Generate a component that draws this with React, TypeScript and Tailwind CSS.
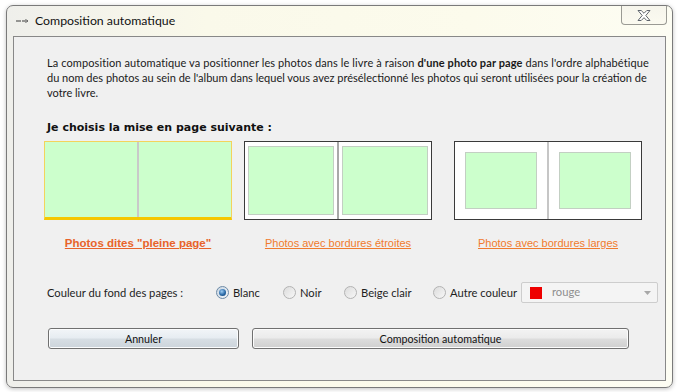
import React from "react";

function Radio({ checked }: { checked?: boolean }) {
  return (
    <div
      className={
        "w-[13px] h-[13px] rounded-full border flex items-center justify-center shrink-0 " +
        (checked
          ? "border-[#6d8aa6] bg-[linear-gradient(135deg,#c9d6e2,#f4f7fa)]"
          : "border-[#b3b3b3] bg-[linear-gradient(135deg,#dcdcdc,#f7f7f7)]")
      }
    >
      {checked && (
        <div className="w-[7px] h-[7px] rounded-full bg-[radial-gradient(circle_at_40%_35%,#9fcdf3,#2a6aa8_55%,#0d3a66)]" />
      )}
    </div>
  );
}

function RadioItem({ label, checked, w }: { label: string; checked?: boolean; w: string }) {
  return (
    <div className={"flex items-center gap-[4px] shrink-0 " + w}>
      <Radio checked={checked} />
      <span className="text-[11.2px] leading-[15px] text-[#1e1e1e] whitespace-nowrap">{label}</span>
    </div>
  );
}

export default function App() {
  const ui = "font-['Lato','Segoe_UI',sans-serif]";
  return (
    <div className={"w-[678px] h-[392px] bg-white pt-[5px] pl-[6px] " + ui}>
      <div className="w-[667px] h-[383px] rounded-[7px] border border-[#7a7a7a] shadow-[0_1px_4px_rgba(0,0,0,0.25)] flex flex-col bg-[linear-gradient(90deg,#efefeb,#faf9ea_30%,#fcfbec_70%,#fdfdf3)]">
        {/* title bar */}
        <div className="h-[30px] flex items-start shrink-0">
          <div className="flex items-center h-[30px] pl-[9px]">
            <svg width="13" height="6" viewBox="0 0 13 6">
              <line x1="0" y1="3" x2="5" y2="3" stroke="#3a3a3a" strokeWidth="1" />
              <line x1="6" y1="3" x2="10" y2="3" stroke="#3a3a3a" strokeWidth="1" />
              <path d="M9.5 1.5 L12 3 L9.5 4.5" fill="none" stroke="#555" strokeWidth="1" />
            </svg>
            <span className="ml-[6px] text-[12.3px] text-[#111] leading-[16px]">Composition automatique</span>
          </div>
          <div className="ml-auto mr-[5px] w-[46px] h-[19px] rounded-b-[4px] border border-t-0 border-[#9a9a94] flex items-center justify-center bg-[linear-gradient(#f6f5ec,#fbfaf0)]">
            <svg width="14" height="11" viewBox="0 0 14 11">
              <polygon
                points="1,0.5 4.2,0.5 7,3.3 9.8,0.5 13,0.5 8.8,5.5 13,10.5 9.8,10.5 7,7.7 4.2,10.5 1,10.5 5.2,5.5"
                fill="#ffffff"
                stroke="#5e646c"
                strokeWidth="1"
                strokeLinejoin="round"
              />
            </svg>
          </div>
        </div>

        {/* inner panel */}
        <div className="mx-[6px] h-[345px] border border-[#888888] bg-[#f0f0f0] flex flex-col shrink-0">
          <div className="pl-[33px] pt-[18px] text-[11px] leading-[15px] text-[#1a1a1a]">
            <div className="whitespace-nowrap tracking-[0.1px]">
              La composition automatique va positionner les photos dans le livre à raison{" "}
              <b className="font-bold">d'une photo par page</b> dans l'ordre alphabétique
            </div>
            <div className="whitespace-nowrap">
              du nom des photos au sein de l'album dans lequel vous avez présélectionné les photos qui seront utilisées pour la création de
            </div>
            <div className="whitespace-nowrap">votre livre.</div>
          </div>

          <div className="pl-[33px] mt-[20px] text-[11px] leading-[15px] font-bold text-[#111] font-['DejaVu_Sans',sans-serif]">
            Je choisis la mise en page suivante :
          </div>

          {/* thumbnails */}
          <div className="flex pl-[30px] mt-[6px]">
            <div className="flex flex-col items-center w-[188px]">
              <div className="w-[188px] h-[79px] border border-[#f3d35c] border-b-[3px] border-b-[#f5c700] bg-[#ccffcc] flex">
                <div className="flex-1" />
                <div className="w-[2px] bg-[#c9c9c9]" />
                <div className="flex-1" />
              </div>
              <a className="mt-[16px] text-[11.5px] leading-[15px] font-bold text-[#e8632a] underline font-['Liberation_Sans',sans-serif] whitespace-nowrap">
                Photos dites "pleine page"
              </a>
            </div>

            <div className="flex flex-col items-center w-[188px] ml-[12px]">
              <div className="w-[188px] h-[79px] border border-[#3a3a3a] bg-white flex">
                <div className="flex-1 px-[3px] py-[4px] flex">
                  <div className="flex-1 bg-[#ccffcc] border border-[#c3cfc3]" />
                </div>
                <div className="w-[2px] bg-[#a9a9a9]" />
                <div className="flex-1 px-[3px] py-[4px] flex">
                  <div className="flex-1 bg-[#ccffcc] border border-[#c3cfc3]" />
                </div>
              </div>
              <a className="mt-[16px] text-[11px] leading-[15px] text-[#f07b2e] underline font-['Liberation_Sans',sans-serif] whitespace-nowrap">
                Photos avec bordures étroites
              </a>
            </div>

            <div className="flex flex-col items-center w-[188px] ml-[22px]">
              <div className="w-[188px] h-[79px] border border-[#3a3a3a] bg-white flex">
                <div className="flex-1 p-[10px] flex">
                  <div className="flex-1 bg-[#ccffcc] border border-[#c3cfc3]" />
                </div>
                <div className="w-[2px] bg-[#c6c6c6]" />
                <div className="flex-1 p-[10px] flex">
                  <div className="flex-1 bg-[#ccffcc] border border-[#c3cfc3]" />
                </div>
              </div>
              <a className="mt-[16px] text-[11px] leading-[15px] text-[#f07b2e] underline font-['Liberation_Sans',sans-serif] whitespace-nowrap">
                Photos avec bordures larges
              </a>
            </div>
          </div>

          {/* background colour row */}
          <div className="flex items-center h-[21px] mt-[31px] pl-[33px]">
            <span className="w-[169px] shrink-0 text-[11.2px] leading-[15px] text-[#1e1e1e] whitespace-nowrap">Couleur du fond des pages :</span>
            <RadioItem label="Blanc" checked w="w-[67px]" />
            <RadioItem label="Noir" w="w-[61px]" />
            <RadioItem label="Beige clair" w="w-[89px]" />
            <RadioItem label="Autre couleur" w="w-[88px]" />
            <div className="w-[137px] h-[21px] border border-[#cdcdcd] rounded-[2px] bg-[#f4f4f4] flex items-center pl-[8px] pr-[6px]">
              <div className="w-[12px] h-[12px] bg-[#ee0000]" />
              <span className="ml-[10px] text-[11.2px] text-[#8e8e8e]">rouge</span>
              <svg width="7" height="4" viewBox="0 0 7 4" className="ml-auto">
                <polygon points="0,0 7,0 3.5,4" fill="#a8a8a8" />
              </svg>
            </div>
          </div>

          {/* buttons */}
          <div className="flex mt-[25px] pl-[34px] gap-[13px]">
            <button className="w-[191px] h-[21px] rounded-[3px] border border-[#707070] shadow-[inset_0_0_0_1px_#fbfcfd] bg-[linear-gradient(#f2f5f8,#e6ecf1_48%,#d7dee4_52%,#ccd4db)] text-[10.7px] text-[#111] leading-[15px]">
              Annuler
            </button>
            <button className="w-[377px] h-[21px] rounded-[3px] border border-[#707070] shadow-[inset_0_0_0_1px_#fcfcfc] bg-[linear-gradient(#f3f3f3,#ebebeb_48%,#dddddd_52%,#cfcfcf)] text-[10.7px] text-[#111] leading-[15px]">
              Composition automatique
            </button>
          </div>
        </div>
      </div>
    </div>
  );
}
